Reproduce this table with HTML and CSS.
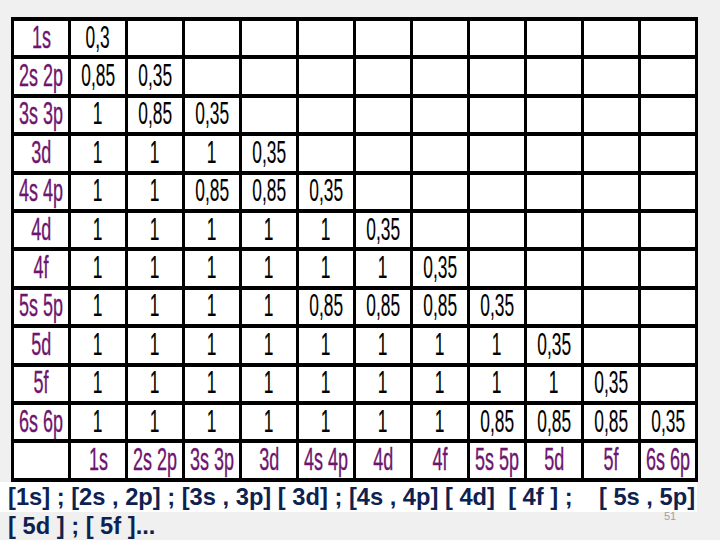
FILE: index.html
```html
<!DOCTYPE html>
<html lang="en">
<head>
  <meta charset="UTF-8" />
  <title>Slater shielding constants</title>
  <link rel="stylesheet" href="styles.css">
</head>
<body>
  <div class="slide">
    <table class="grid">
      <tr><th><span>1s</span></th><td><span>0,3</span></td><td></td><td></td><td></td><td></td><td></td><td></td><td></td><td></td><td></td><td></td></tr>
      <tr><th><span>2s 2p</span></th><td><span>0,85</span></td><td><span>0,35</span></td><td></td><td></td><td></td><td></td><td></td><td></td><td></td><td></td><td></td></tr>
      <tr><th><span>3s 3p</span></th><td><span>1</span></td><td><span>0,85</span></td><td><span>0,35</span></td><td></td><td></td><td></td><td></td><td></td><td></td><td></td><td></td></tr>
      <tr><th><span>3d</span></th><td><span>1</span></td><td><span>1</span></td><td><span>1</span></td><td><span>0,35</span></td><td></td><td></td><td></td><td></td><td></td><td></td><td></td></tr>
      <tr><th><span>4s 4p</span></th><td><span>1</span></td><td><span>1</span></td><td><span>0,85</span></td><td><span>0,85</span></td><td><span>0,35</span></td><td></td><td></td><td></td><td></td><td></td><td></td></tr>
      <tr><th><span>4d</span></th><td><span>1</span></td><td><span>1</span></td><td><span>1</span></td><td><span>1</span></td><td><span>1</span></td><td><span>0,35</span></td><td></td><td></td><td></td><td></td><td></td></tr>
      <tr><th><span>4f</span></th><td><span>1</span></td><td><span>1</span></td><td><span>1</span></td><td><span>1</span></td><td><span>1</span></td><td><span>1</span></td><td><span>0,35</span></td><td></td><td></td><td></td><td></td></tr>
      <tr><th><span>5s 5p</span></th><td><span>1</span></td><td><span>1</span></td><td><span>1</span></td><td><span>1</span></td><td><span>0,85</span></td><td><span>0,85</span></td><td><span>0,85</span></td><td><span>0,35</span></td><td></td><td></td><td></td></tr>
      <tr><th><span>5d</span></th><td><span>1</span></td><td><span>1</span></td><td><span>1</span></td><td><span>1</span></td><td><span>1</span></td><td><span>1</span></td><td><span>1</span></td><td><span>1</span></td><td><span>0,35</span></td><td></td><td></td></tr>
      <tr><th><span>5f</span></th><td><span>1</span></td><td><span>1</span></td><td><span>1</span></td><td><span>1</span></td><td><span>1</span></td><td><span>1</span></td><td><span>1</span></td><td><span>1</span></td><td><span>1</span></td><td><span>0,35</span></td><td></td></tr>
      <tr><th><span>6s 6p</span></th><td><span>1</span></td><td><span>1</span></td><td><span>1</span></td><td><span>1</span></td><td><span>1</span></td><td><span>1</span></td><td><span>1</span></td><td><span>0,85</span></td><td><span>0,85</span></td><td><span>0,85</span></td><td><span>0,35</span></td></tr>
      <tr class="foot"><th></th><th><span>1s</span></th><th><span>2s 2p</span></th><th><span>3s 3p</span></th><th><span>3d</span></th><th><span>4s 4p</span></th><th><span>4d</span></th><th><span>4f</span></th><th><span>5s 5p</span></th><th><span>5d</span></th><th><span>5f</span></th><th><span>6s 6p</span></th></tr>
    </table>
    <p class="groups first">[1s] ; [2s , 2p] ; [3s , 3p] [ 3d] ; [4s , 4p] [ 4d]  [ 4f ] ;    [ 5s , 5p]</p>
    <p class="groups">[ 5d ] ; [ 5f ]...</p>
    <span class="page">51</span>
  </div>
</body>
</html>
```

FILE: styles.css
```css
* { box-sizing: border-box; }
body { margin: 0; background: #f0f0f0; font-family: "Liberation Sans", Arial, sans-serif; }
.slide { position: relative; width: 720px; height: 540px; padding-top: 17px; overflow: hidden; }

.grid { margin-left: 11px; width: 687px; border-collapse: collapse; background: #fff; table-layout: fixed; }
.grid td, .grid th { height: 38.4px; padding: 0; text-align: center; vertical-align: middle; border-left: 3px solid #000; border-right: 3px solid #000; border-top: 4px solid #000; border-bottom: 4px solid #000; font-weight: normal; line-height: 1; }
.grid span { display: inline-block; font-size: 31px; transform: scaleX(0.56); white-space: nowrap; margin: 0 -25px; position: relative; top: -1px; }
.grid td span { color: #000; -webkit-text-stroke: 0.15px #000; }
.grid th span { color: #6e146e; -webkit-text-stroke: 0.35px #6e146e; transform: scaleX(0.58); }

.groups { margin: 0; padding-left: 8px; font-size: 23.7px; font-weight: bold; color: #0d2250; white-space: pre; height: 30px; line-height: 30px; }
.groups.first { background: #fff; width: 697px; }
.groups + .groups { height: 28px; line-height: 28px; }
.page { position: absolute; left: 664px; top: 511px; font-size: 11px; line-height: 11px; color: #a0a0a0; }
```
